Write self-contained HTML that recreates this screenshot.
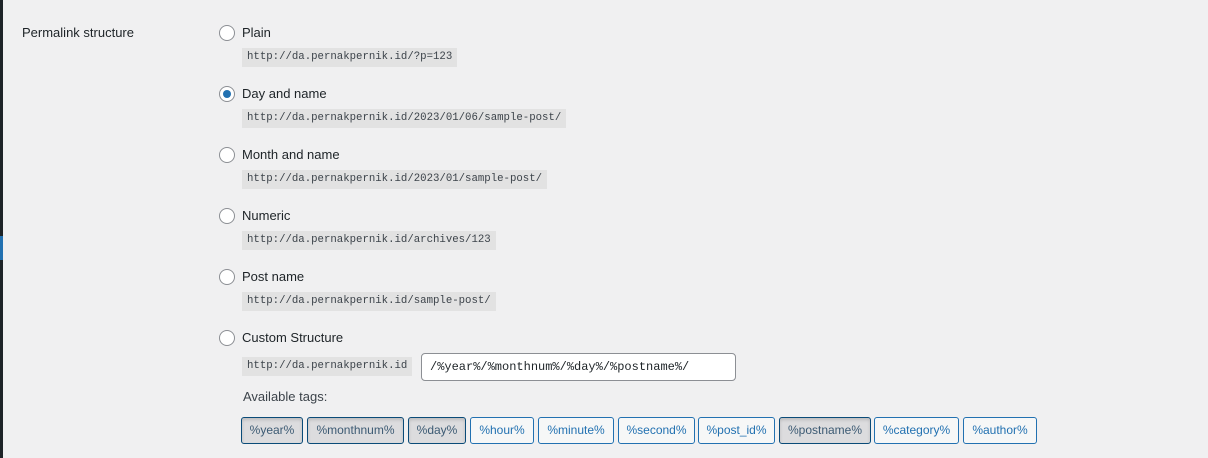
<!DOCTYPE html>
<html><head><style>
body{margin:0;width:1208px;height:458px;background:#f0f0f1;font-family:"Liberation Sans",sans-serif;position:relative;overflow:hidden;color:#1d2327;font-size:13px}
.strip{position:absolute;left:0;top:0;width:3px;height:458px;background:#1d2327}
.blue{position:absolute;left:0;top:236px;width:3px;height:24px;background:#2271b1}
.lbl{position:absolute;left:22px;top:25px;font-size:13px}
.r{position:absolute;left:219px;width:14px;height:14px;border:1px solid #8c8f94;border-radius:50%;background:#fff}
.r.on::after{content:"";position:absolute;left:3px;top:3px;width:8px;height:8px;border-radius:50%;background:#2271b1}
.t{position:absolute;left:242px;font-size:13px}
code{position:absolute;left:242px;height:19px;line-height:19px;background:#e2e2e2;font-family:"Liberation Mono",monospace;font-size:10.7px;padding:0 5px;color:#3c434a;white-space:nowrap}
.inp{position:absolute;left:421px;top:353px;border:1px solid #8c8f94;border-radius:4px;background:#fff;font-family:"Liberation Mono",monospace;font-size:12px;line-height:26px;padding-left:8px;box-sizing:border-box;width:315px;height:28px}
.b{position:absolute;top:417px;height:27px;box-sizing:border-box;border:1px solid #2271b1;border-radius:3px;background:#f6f7f7;color:#2271b1;font-size:12px;line-height:25px;text-align:center}
.b.on{background:#dcdcde;border-color:#0a4b78;color:#3c5a73;box-shadow:inset 0 2px 3px rgba(0,0,0,.15)}
</style></head><body>
<div class="strip"></div><div class="blue"></div>
<div class="lbl">Permalink structure</div>

<div class="r" style="top:25px"></div><div class="t" style="top:25px">Plain</div>
<code style="top:48px">http://da.pernakpernik.id/?p=123</code>

<div class="r on" style="top:86px"></div><div class="t" style="top:86px">Day and name</div>
<code style="top:109px">http://da.pernakpernik.id/2023/01/06/sample-post/</code>

<div class="r" style="top:147px"></div><div class="t" style="top:147px">Month and name</div>
<code style="top:170px">http://da.pernakpernik.id/2023/01/sample-post/</code>

<div class="r" style="top:208px"></div><div class="t" style="top:208px">Numeric</div>
<code style="top:231px">http://da.pernakpernik.id/archives/123</code>

<div class="r" style="top:269px"></div><div class="t" style="top:269px">Post name</div>
<code style="top:292px">http://da.pernakpernik.id/sample-post/</code>

<div class="r" style="top:330px"></div><div class="t" style="top:330px">Custom Structure</div>
<code style="top:357px">http://da.pernakpernik.id</code>
<div class="inp">/%year%/%monthnum%/%day%/%postname%/</div>
<div class="t" style="top:389px;left:243px;color:#3c434a">Available tags:</div>

<div class="b on" style="left:241px;width:62px">%year%</div>
<div class="b on" style="left:307px;width:97px">%monthnum%</div>
<div class="b on" style="left:408px;width:58px">%day%</div>
<div class="b" style="left:470px;width:64px">%hour%</div>
<div class="b" style="left:538px;width:76px">%minute%</div>
<div class="b" style="left:618px;width:77px">%second%</div>
<div class="b" style="left:698px;width:77px">%post_id%</div>
<div class="b on" style="left:779px;width:92px">%postname%</div>
<div class="b" style="left:874px;width:85px">%category%</div>
<div class="b" style="left:963px;width:74px">%author%</div>
</body></html>
